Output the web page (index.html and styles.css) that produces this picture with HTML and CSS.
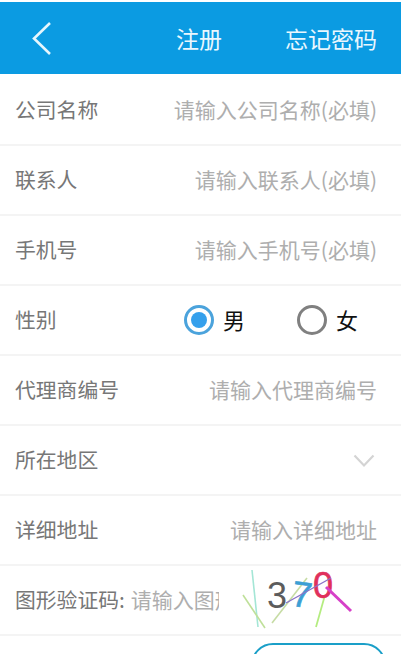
FILE: index.html
```html
<!DOCTYPE html>
<html lang="zh-CN">
<head>
<meta charset="utf-8">
<title>注册</title>
<link rel="stylesheet" href="styles.css">
</head>
<body>
<div class="page">
  <header class="topbar">
    <svg class="back" width="24" height="36" viewBox="0 0 24 36"><path d="M20 3 L4 18.5 L20 34" fill="none" stroke="#e6f6fd" stroke-width="2.6"/></svg>
    <span class="title">注册</span>
    <span class="forgot">忘记密码</span>
  </header>
  <div class="form">
    <div class="row"><span class="label">公司名称</span><span class="ph">请输入公司名称(必填)</span></div>
    <div class="row"><span class="label">联系人</span><span class="ph">请输入联系人(必填)</span></div>
    <div class="row"><span class="label">手机号</span><span class="ph">请输入手机号(必填)</span></div>
    <div class="row">
      <span class="label">性别</span>
      <div class="radios">
        <span class="radio on"><i class="dot"></i></span><span class="opt first">男</span>
        <span class="radio"></span><span class="opt">女</span>
      </div>
    </div>
    <div class="row"><span class="label">代理商编号</span><span class="ph">请输入代理商编号</span></div>
    <div class="row"><span class="label">所在地区</span>
      <svg class="chev" width="22" height="14" viewBox="0 0 22 14"><path d="M1.5 1.5 L11 11.5 L20.5 1.5" fill="none" stroke="#d4d4d4" stroke-width="2.2"/></svg>
    </div>
    <div class="row"><span class="label">详细地址</span><span class="ph">请输入详细地址</span></div>
    <div class="row captcha-row">
      <span class="label">图形验证码:</span>
      <span class="ph clip">请输入图形</span>
      <svg class="captcha" width="122" height="68" viewBox="0 0 122 68">
        <path d="M13 4 L19 61" stroke="#a4e6d6" stroke-width="1.6"/>
        <path d="M4 29 L26 62" stroke="#bfe09a" stroke-width="1.6"/>
        <path d="M33 57 L68 12" stroke="#c6dca4" stroke-width="1.6"/>
        <path d="M86 29 L77 61" stroke="#b4ec80" stroke-width="1.8"/>
        <text x="28" y="42" class="digit" fill="#5c5c5c">3</text>
        <text x="53" y="41" class="digit seven" fill="#3c9fd4" transform="rotate(8 63 28)">7</text>
        <text x="74" y="32" class="digit zero" fill="#e0305c">0</text>
        <path d="M87 21 L112 45" stroke="#d640c8" stroke-width="3"/>
        <path d="M47 37 L92 12" stroke="#8a72c8" stroke-width="1.4"/>
      </svg>
    </div>
    <div class="send-row"><div class="send"></div></div>
  </div>
</div>
</body>
</html>
```
FILE: styles.css
```css
* { box-sizing: border-box; }
html, body { margin: 0; padding: 0; background: #fff; }
body { font-family: "Noto Sans CJK SC", "Noto Sans", sans-serif; }
.page { width: 401px; height: 654px; overflow: hidden; padding-top: 2px; }
.topbar { height: 72px; background: #0b9be2; display: flex; align-items: center; color: #e9f7fe; font-size: 23px; padding-left: 30px; padding-right: 24px; }
.back { flex: none; }
.title { margin-left: 122px; }
.forgot { margin-left: auto; }
.form { padding-top: 2px; }
.row { height: 70px; border-bottom: 2px solid #f4f4f4; display: flex; align-items: center; justify-content: space-between; padding: 0 24px 2px 15px; }
.label { font-size: 20.8px; color: #777; white-space: nowrap; }
.ph { font-size: 21px; color: #aeaeae; white-space: nowrap; }
.radios { display: flex; align-items: center; width: 178px; margin-right: 15px; margin-top: 2px; color: #111; font-size: 22px; }
.radio { width: 30px; height: 30px; border-radius: 50%; border: 3px solid #808080; display: flex; align-items: center; justify-content: center; flex: none; }
.radio.on { border-color: #4ba3dc; }
.dot { width: 16px; height: 16px; border-radius: 50%; background: #35a0ec; display: block; }
.opt { margin-left: 9px; margin-top: -2px; }
.opt.first { margin-right: 52px; }
.chev { flex: none; margin-right: 2px; margin-top: 4px; }
.captcha-row { justify-content: flex-start; padding-right: 0; }
.clip { width: 88px; overflow: hidden; margin-left: 6px; flex: none; }
.captcha { flex: none; margin-left: 20px; margin-top: 2px; }
.digit { font-family: "Liberation Sans", sans-serif; font-size: 36px; }
.seven { stroke: #3c9fd4; stroke-width: 0.6px; }
.zero { stroke: #e0305c; stroke-width: 0.6px; }
.send-row { display: flex; justify-content: flex-end; padding: 7px 15px 0 0; }
.send { width: 135px; height: 44px; border: 2px solid #1a9fc8; border-radius: 22px; }
```
